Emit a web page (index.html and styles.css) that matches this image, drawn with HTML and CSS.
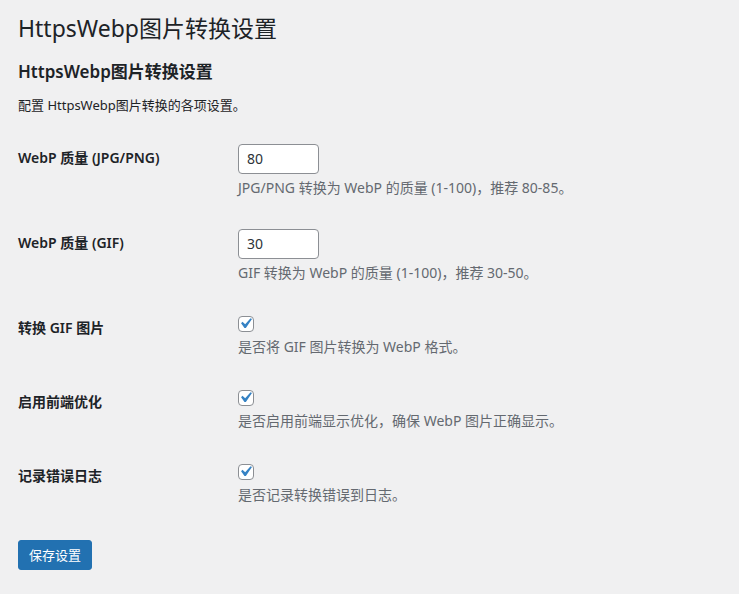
FILE: index.html
```html
<!DOCTYPE html>
<html lang="zh-CN">
<head>
<meta charset="utf-8">
<title>HttpsWebp图片转换设置</title>
<link rel="stylesheet" href="styles.css">
</head>
<body>
<div class="wrap">
  <h1 class="page-title">HttpsWebp图片转换设置</h1>
  <form>
    <h2 class="section-title">HttpsWebp图片转换设置</h2>
    <p class="intro">配置 HttpsWebp图片转换的各项设置。</p>
    <table class="form-table">
      <tbody>
        <tr>
          <th>WebP 质量 (JPG/PNG)</th>
          <td>
            <div class="field field-input"><input type="number" class="num" value="80"></div>
            <p class="description">JPG/PNG 转换为 WebP 的质量 (1-100)，推荐 80-85。</p>
          </td>
        </tr>
        <tr>
          <th>WebP 质量 (GIF)</th>
          <td>
            <div class="field field-input"><input type="number" class="num" value="30"></div>
            <p class="description">GIF 转换为 WebP 的质量 (1-100)，推荐 30-50。</p>
          </td>
        </tr>
        <tr>
          <th>转换 GIF 图片</th>
          <td>
            <div class="field field-check"><span class="cb"><input type="checkbox" checked><svg class="tick" viewBox="0 0 20 20"><path d="M14.83 4.89l1.34.94-5.810 8.38H9.02L5.78 9.67l1.34-1.25 2.57 2.4z"/></svg></span></div>
            <p class="description">是否将 GIF 图片转换为 WebP 格式。</p>
          </td>
        </tr>
        <tr>
          <th>启用前端优化</th>
          <td>
            <div class="field field-check"><span class="cb"><input type="checkbox" checked><svg class="tick" viewBox="0 0 20 20"><path d="M14.83 4.89l1.34.94-5.81 8.38H9.02L5.78 9.67l1.34-1.25 2.57 2.4z"/></svg></span></div>
            <p class="description">是否启用前端显示优化，确保 WebP 图片正确显示。</p>
          </td>
        </tr>
        <tr>
          <th>记录错误日志</th>
          <td>
            <div class="field field-check"><span class="cb"><input type="checkbox" checked><svg class="tick" viewBox="0 0 20 20"><path d="M14.83 4.89l1.34.94-5.81 8.38H9.02L5.78 9.67l1.34-1.25 2.57 2.4z"/></svg></span></div>
            <p class="description">是否记录转换错误到日志。</p>
          </td>
        </tr>
      </tbody>
    </table>
    <p class="submit"><button type="button" class="button-primary">保存设置</button></p>
  </form>
</div>
</body>
</html>
```

FILE: styles.css
```css
html, body {
  margin: 0;
  padding: 0;
  background: #f0f0f1;
}
body {
  color: #1d2327;
  font-family: "Segoe UI", "Noto Sans", "Noto Sans CJK SC", sans-serif;
  font-size: 13px;
  line-height: 1.4;
}
.wrap {
  padding: 5px 20px 0 18px;
}
.page-title {
  font-size: 23px;
  font-weight: 400;
  margin: 0;
  padding: 9px 0 4px;
  line-height: 1.3;
}
.section-title {
  font-size: 17px;
  font-weight: 600;
  margin: 13px 0 13px;
  line-height: 1.3;
}
.intro {
  margin: 0;
  font-size: 13px;
  line-height: 18px;
}
.form-table {
  border-collapse: collapse;
  margin-top: 15px;
  width: 100%;
}
.form-table th {
  width: 200px;
  padding: 20px 10px 20px 0;
  text-align: left;
  vertical-align: top;
  font-weight: 600;
  line-height: 18px;
  font-size: 14px;
}
.form-table td {
  padding: 15px 10px 17px;
  vertical-align: top;
  line-height: 18px;
}
.field-input {
  height: 32px;
}
.field-check {
  height: 21px;
  padding-top: 2px;
  box-sizing: border-box;
}
.num {
  box-sizing: border-box;
  display: block;
  width: 81px;
  height: 30px;
  padding: 0 8px;
  border: 1px solid #8c8f94;
  border-radius: 4px;
  background: #fff;
  color: #2c3338;
  font-family: inherit;
  font-size: 14px;
  -moz-appearance: textfield;
  appearance: textfield;
}
.num::-webkit-inner-spin-button,
.num::-webkit-outer-spin-button {
  -webkit-appearance: none;
  margin: 0;
}
.cb {
  position: relative;
  display: inline-block;
  width: 16px;
  height: 16px;
}
.cb input {
  appearance: none;
  -webkit-appearance: none;
  box-sizing: border-box;
  display: block;
  margin: 0;
  width: 16px;
  height: 16px;
  border: 1px solid #8c8f94;
  border-radius: 4px;
  background: #fff;
}
.tick {
  position: absolute;
  left: -3px;
  top: -3px;
  width: 21px;
  height: 21px;
  fill: #3582c4;
  pointer-events: none;
}
.description {
  margin: 3px 0 0;
  color: #646970;
  font-size: 14px;
  line-height: 18px;
}
.submit {
  margin: 19px 0 0;
  padding: 0;
}
.button-primary {
  box-sizing: border-box;
  height: 30px;
  padding: 0 10px;
  border: 1px solid #2271b1;
  border-radius: 3px;
  background: #2271b1;
  color: #fff;
  font-family: inherit;
  font-size: 13px;
  line-height: 28px;
}
```
